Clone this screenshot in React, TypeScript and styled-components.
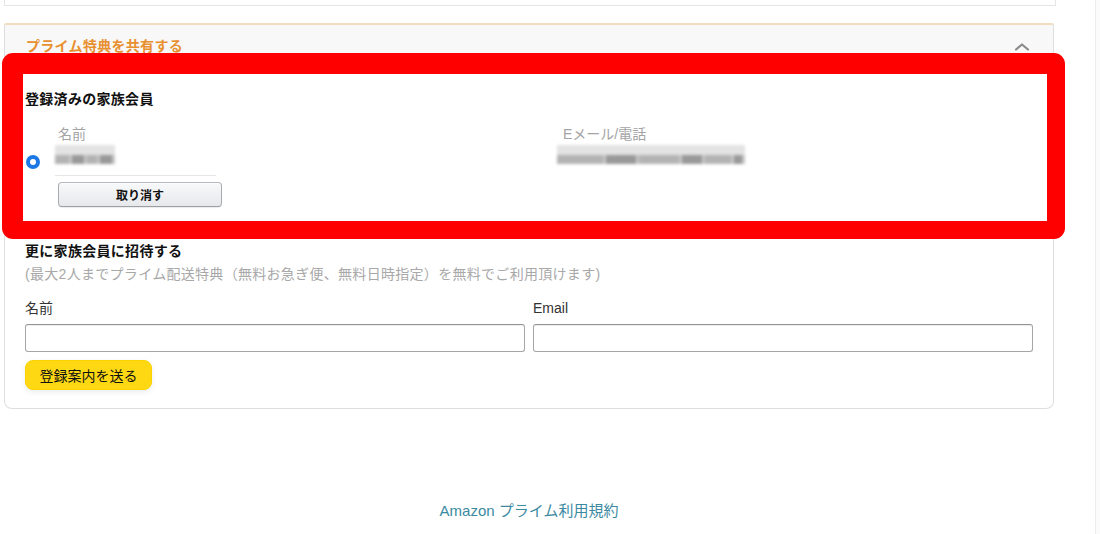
import * as React from "react";
import styled, { createGlobalStyle } from "styled-components";

const GlobalStyle = createGlobalStyle`
  html, body {
    margin: 0;
    padding: 0;
    background: #fff;
  }
  body {
    font-family: "Liberation Sans", "Noto Sans CJK JP", sans-serif;
    color: #111;
  }
`;

const Page = styled.div`
  display: flex;
  width: 1100px;
  height: 534px;
  overflow: hidden;
`;

const Main = styled.main`
  width: 1095px;
  padding-left: 4px;
  box-sizing: border-box;
`;

const SideStrip = styled.aside`
  flex: 1;
  border-left: 1px solid #ececec;
  background: #fbfbfb;
`;

const CardStub = styled.div`
  width: 1050px;
  height: 5px;
  box-sizing: content-box;
  border: 1px solid #e6e6e6;
  border-top: none;
`;

const Card = styled.section`
  width: 1050px;
  box-sizing: border-box;
  margin-top: 17px;
  border: 1px solid #dedede;
  border-top: 2px solid #f1ddbd;
  border-radius: 2px 2px 8px 8px;
  background: #fff;
`;

const CardHeader = styled.header`
  display: flex;
  align-items: center;
  justify-content: space-between;
  height: 39px;
  padding: 3px 23px 0 21px;
  box-sizing: border-box;
  background: #f8f8f8;
`;

const Title = styled.h2`
  margin: 0;
  font-size: 14px;
  line-height: 20px;
  letter-spacing: 0.3px;
  font-weight: 700;
  color: #e8902f;
`;

const CardBody = styled.div`
  padding: 0 20px 18px;
`;

const Registered = styled.div`
  position: relative;
  padding: 26px 0 32px;
`;

const Highlight = styled.div`
  position: absolute;
  top: -11px;
  bottom: 0;
  left: -23px;
  right: -32px;
  border-style: solid;
  border-color: #ff0000;
  border-width: 21px 18px 18px 21px;
  border-radius: 11px;
  pointer-events: none;
`;

const Heading = styled.h3<{ $top: number }>`
  margin: ${(p) => p.$top}px 0 0;
  font-size: 14px;
  line-height: 18px;
  letter-spacing: 0.3px;
  font-weight: 700;
  color: #111;
`;

const MemberGrid = styled.div`
  display: grid;
  grid-template-columns: 33px 505px 1fr;
  grid-template-rows: 18px 24px auto;
  row-gap: 2px;
  margin-top: 17px;
`;

const ColLabel = styled.div<{ $col: number }>`
  grid-column: ${(p) => p.$col};
  grid-row: 1;
  font-size: 14px;
  line-height: 18px;
  color: #a3a3a3;
`;

const Radio = styled.span`
  grid-column: 1;
  grid-row: 2;
  align-self: end;
  margin: 0 0 0 1px;
  width: 14px;
  height: 14px;
  box-sizing: border-box;
  border-radius: 50%;
  border: 4px solid #1c78e4;
  background: #fff;
`;

const Redacted = styled.div<{ $col: number; $width: number; $shift: number }>`
  grid-column: ${(p) => p.$col};
  grid-row: 2;
  width: ${(p) => p.$width}px;
  height: 23px;
  margin-left: ${(p) => p.$shift}px;
  display: flex;
  flex-direction: column;
  filter: blur(1.5px);
`;

const RedactTop = styled.div`
  height: 10px;
  background: #e3e3e3;
`;

const RedactBand = styled.div`
  display: flex;
  height: 9px;
  gap: 3px;
  background: #c6c6c6;
`;

const RedactPiece = styled.span<{ $w: number; $dark?: boolean }>`
  width: ${(p) => p.$w}px;
  background: ${(p) => (p.$dark ? "#999999" : "#b3b3b3")};
`;

const CancelRow = styled.div`
  grid-column: 2;
  grid-row: 3;
  width: 158px;
  margin: 4px 0 0 -3px;
  padding: 6px 0 0 3px;
  border-top: 1px solid #e6e6e6;
`;

const CancelButton = styled.button`
  display: block;
  width: 164px;
  height: 25px;
  border: 1px solid #adb1b8;
  border-color: #b5b8bd #a8acb2 #9a9ea5;
  border-radius: 4px;
  background: linear-gradient(#f8f9fa, #e6e8eb);
  box-shadow: 0 1px 0 rgba(255, 255, 255, 0.6) inset, 0 1px 1px rgba(0, 0, 0, 0.08);
  font-family: inherit;
  font-size: 12px;
  font-weight: 700;
  color: #111;
  padding: 0;
`;

const Note = styled.p`
  margin: 5px 0 0;
  font-size: 14px;
  line-height: 18px;
  letter-spacing: 0.3px;
  color: #a8a8a8;
`;

const InviteGrid = styled.div`
  display: grid;
  grid-template-columns: 1fr 1fr;
  column-gap: 8px;
  row-gap: 7px;
  margin-top: 16px;
`;

const FieldLabel = styled.label`
  font-size: 14px;
  line-height: 18px;
  color: #333;
`;

const TextInput = styled.input`
  height: 28px;
  box-sizing: border-box;
  border: 1px solid #a6a6a6;
  border-top-color: #949494;
  border-radius: 3px;
  box-shadow: 0 1px 0 rgba(255, 255, 255, 0.5), 0 1px 0 rgba(0, 0, 0, 0.07) inset;
  background: #fff;
  outline: none;
`;

const SendButton = styled.button`
  display: block;
  margin-top: 8px;
  width: 127px;
  height: 30px;
  border: 1px solid #fcd200;
  border-radius: 8px;
  background: #ffd814;
  box-shadow: 0 2px 5px rgba(213, 217, 217, 0.5);
  font-family: inherit;
  font-size: 14px;
  color: #0f1111;
  padding: 0;
`;

const Footer = styled.footer`
  margin-top: 93px;
  text-align: center;
  width: 1050px;
  font-size: 15px;
  line-height: 18px;
`;

const FooterLink = styled.a`
  color: #3b8a9f;
  text-decoration: none;
`;

const ChevronUp = () => (
  <svg width="16" height="9" viewBox="0 0 16 9" aria-hidden="true">
    <polyline points="2,7.5 8,2.5 14,7.5" fill="none" stroke="#8a8a8a" strokeWidth="2.2" strokeLinecap="round" strokeLinejoin="round" />
  </svg>
);

const App: React.FunctionComponent = () => {
  return (
    <Page>
      <GlobalStyle />
      <Main>
        <CardStub />
        <Card>
          <CardHeader>
            <Title>プライム特典を共有する</Title>
            <ChevronUp />
          </CardHeader>
          <CardBody>
            <Registered>
              <Heading $top={0}>登録済みの家族会員</Heading>
              <MemberGrid>
                <ColLabel $col={2}>名前</ColLabel>
                <ColLabel $col={3}>Eメール/電話</ColLabel>
                <Radio />
                <Redacted $col={2} $width={60} $shift={-3}>
                  <RedactTop />
                  <RedactBand>
                    <RedactPiece $w={14} />
                    <RedactPiece $w={12} $dark />
                    <RedactPiece $w={10} />
                    <RedactPiece $w={12} $dark />
                  </RedactBand>
                </Redacted>
                <Redacted $col={3} $width={188} $shift={-6}>
                  <RedactTop />
                  <RedactBand>
                    <RedactPiece $w={46} />
                    <RedactPiece $w={30} $dark />
                    <RedactPiece $w={40} />
                    <RedactPiece $w={20} $dark />
                    <RedactPiece $w={26} />
                    <RedactPiece $w={8} $dark />
                  </RedactBand>
                </Redacted>
                <CancelRow>
                  <CancelButton>取り消す</CancelButton>
                </CancelRow>
              </MemberGrid>
              <Highlight />
            </Registered>

            <Heading $top={3}>更に家族会員に招待する</Heading>
            <Note>(最大2人までプライム配送特典（無料お急ぎ便、無料日時指定）を無料でご利用頂けます)</Note>
            <InviteGrid>
              <FieldLabel>名前</FieldLabel>
              <FieldLabel>Email</FieldLabel>
              <TextInput type="text" />
              <TextInput type="email" />
            </InviteGrid>
            <SendButton>登録案内を送る</SendButton>
          </CardBody>
        </Card>
        <Footer>
          <FooterLink href="#">Amazon プライム利用規約</FooterLink>
        </Footer>
      </Main>
      <SideStrip />
    </Page>
  );
};

export default App;
